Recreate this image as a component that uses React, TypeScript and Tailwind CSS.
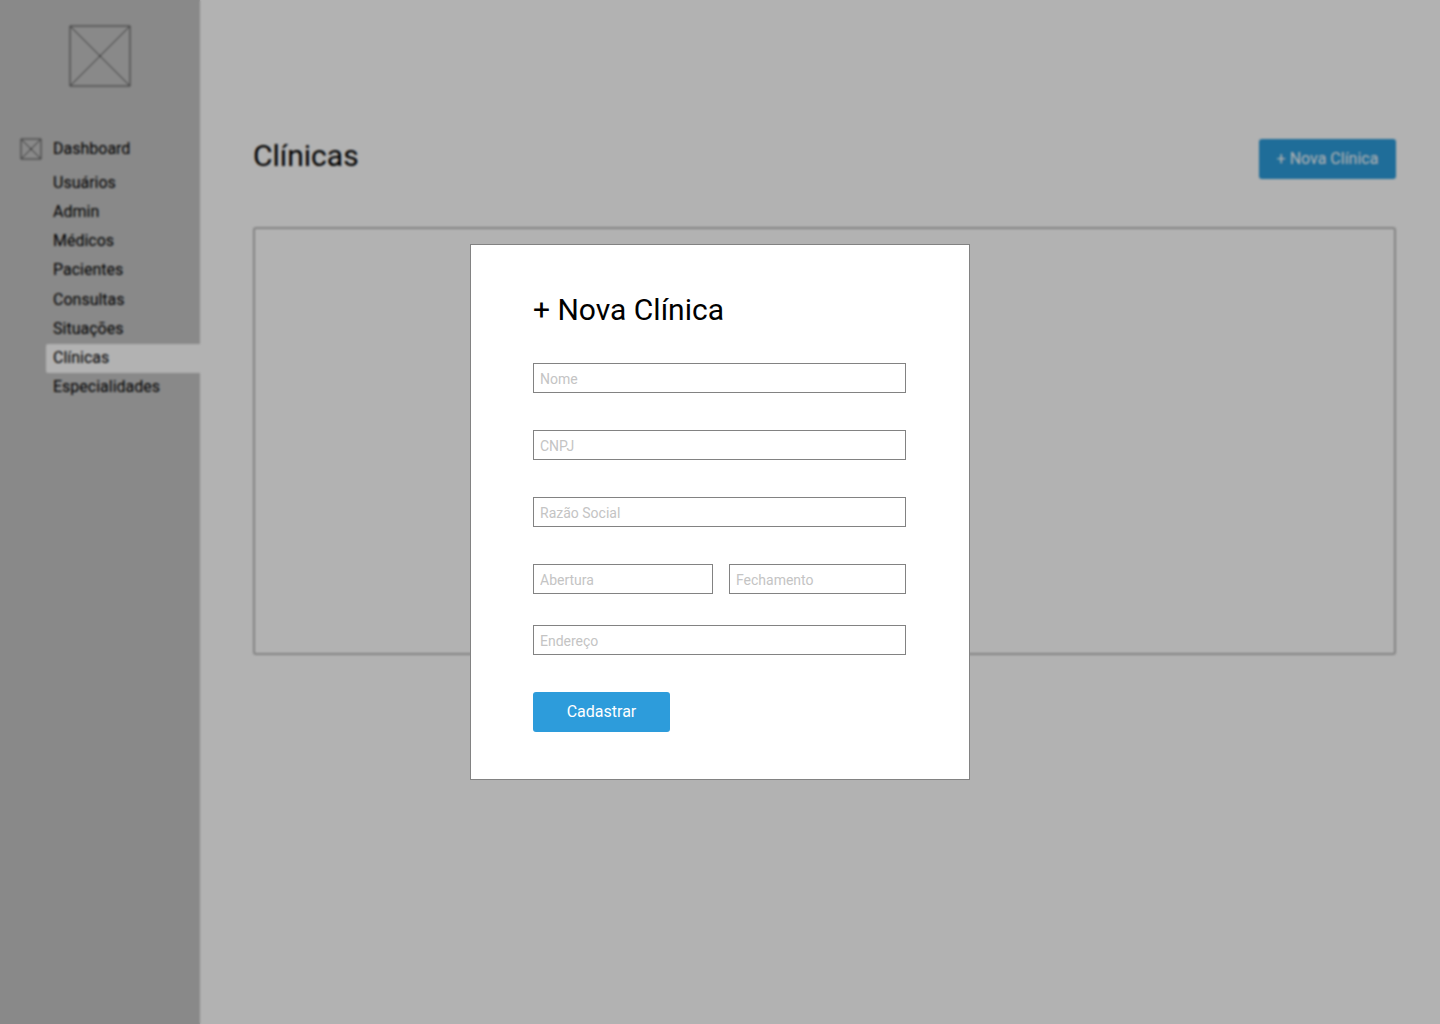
const menuItems = [
  'Usuários',
  'Admin',
  'Médicos',
  'Pacientes',
  'Consultas',
  'Situações',
  'Clínicas',
  'Especialidades',
];

const activeItem = 'Clínicas';

function PlaceholderImage({ className }: { className: string }) {
  return (
    <svg className={className} viewBox="0 0 100 100" fill="none" stroke="#4f4f4f" aria-hidden="true">
      <path
        d="M0 0H100V100H0ZM0 0L100 100M100 0L0 100"
        strokeWidth="1"
        vectorEffect="non-scaling-stroke"
      />
    </svg>
  );
}

function Sidebar() {
  return (
    <aside className="w-[200px] shrink-0 bg-[#c4c4c4] pt-[26px]">
      <PlaceholderImage className="mx-auto size-[60px] overflow-visible" />
      <nav className="mt-[47px]" aria-label="Menu principal">
        <a href="#dashboard" className="flex h-[31px] items-center pl-[21px]">
          <PlaceholderImage className="mr-3 size-5 overflow-visible" />
          Dashboard
        </a>
        <ul className="mt-1 grid h-[234px] auto-rows-fr">
          {menuItems.map((item) => (
            <li key={item} className="pl-[46px]">
              <a
                href={'#' + item.toLowerCase()}
                aria-current={item === activeItem ? 'page' : undefined}
                className="flex h-full items-center rounded-l-xs pl-[7px] aria-[current=page]:bg-white"
              >
                {item}
              </a>
            </li>
          ))}
        </ul>
      </nav>
    </aside>
  );
}

function Field({ label, name, className = '' }: { label: string; name: string; className?: string }) {
  return (
    <input
      type="text"
      name={name}
      aria-label={label}
      placeholder={label}
      className={
        'h-[30px] w-full min-w-0 border border-[#828282] bg-white px-1.5 pt-0.5 text-sm text-black placeholder:text-[#c4c4c4] ' +
        className
      }
    />
  );
}

function NewClinicDialog() {
  return (
    <div className="fixed inset-0 flex items-center justify-center bg-black/30 backdrop-blur-[1px]">
      <section
        role="dialog"
        aria-modal="true"
        aria-labelledby="dialog-title"
        className="w-full max-w-[500px] border border-[#828282] bg-white py-[47px] pr-[63px] pl-[62px]"
      >
        <h2 id="dialog-title" className="text-3xl leading-9">
          + Nova Clínica
        </h2>
        <form className="mt-[35px] flex flex-col" onSubmit={(event) => event.preventDefault()}>
          <div className="flex flex-col gap-[37px]">
            <Field label="Nome" name="nome" />
            <Field label="CNPJ" name="cnpj" />
            <Field label="Razão Social" name="razaoSocial" />
            <div className="grid grid-cols-[180fr_177fr] gap-4">
              <Field label="Abertura" name="abertura" />
              <Field label="Fechamento" name="fechamento" />
            </div>
          </div>
          <Field label="Endereço" name="endereco" className="mt-[31px]" />
          <button
            type="submit"
            className="mt-[37px] h-10 w-[137px] rounded-[3px] bg-[#2d9cdb] text-base text-white"
          >
            Cadastrar
          </button>
        </form>
      </section>
    </div>
  );
}

export default function App() {
  return (
    <div className="flex min-h-screen bg-white font-[Roboto,sans-serif] text-base text-black">
      <Sidebar />
      <main className="min-w-0 flex-1 pt-[138px] pr-11 pl-[53px]">
        <header className="flex items-start justify-between">
          <h1 className="text-3xl leading-9">Clínicas</h1>
          <button type="button" className="mt-px h-10 w-[137px] rounded-[3px] bg-[#2d9cdb] text-white">
            + Nova Clínica
          </button>
        </header>
        <section
          aria-label="Lista de clínicas"
          className="mt-12 h-[428px] rounded-[3px] border-2 border-[#bdbdbd]"
        />
      </main>
      <NewClinicDialog />
    </div>
  );
}
